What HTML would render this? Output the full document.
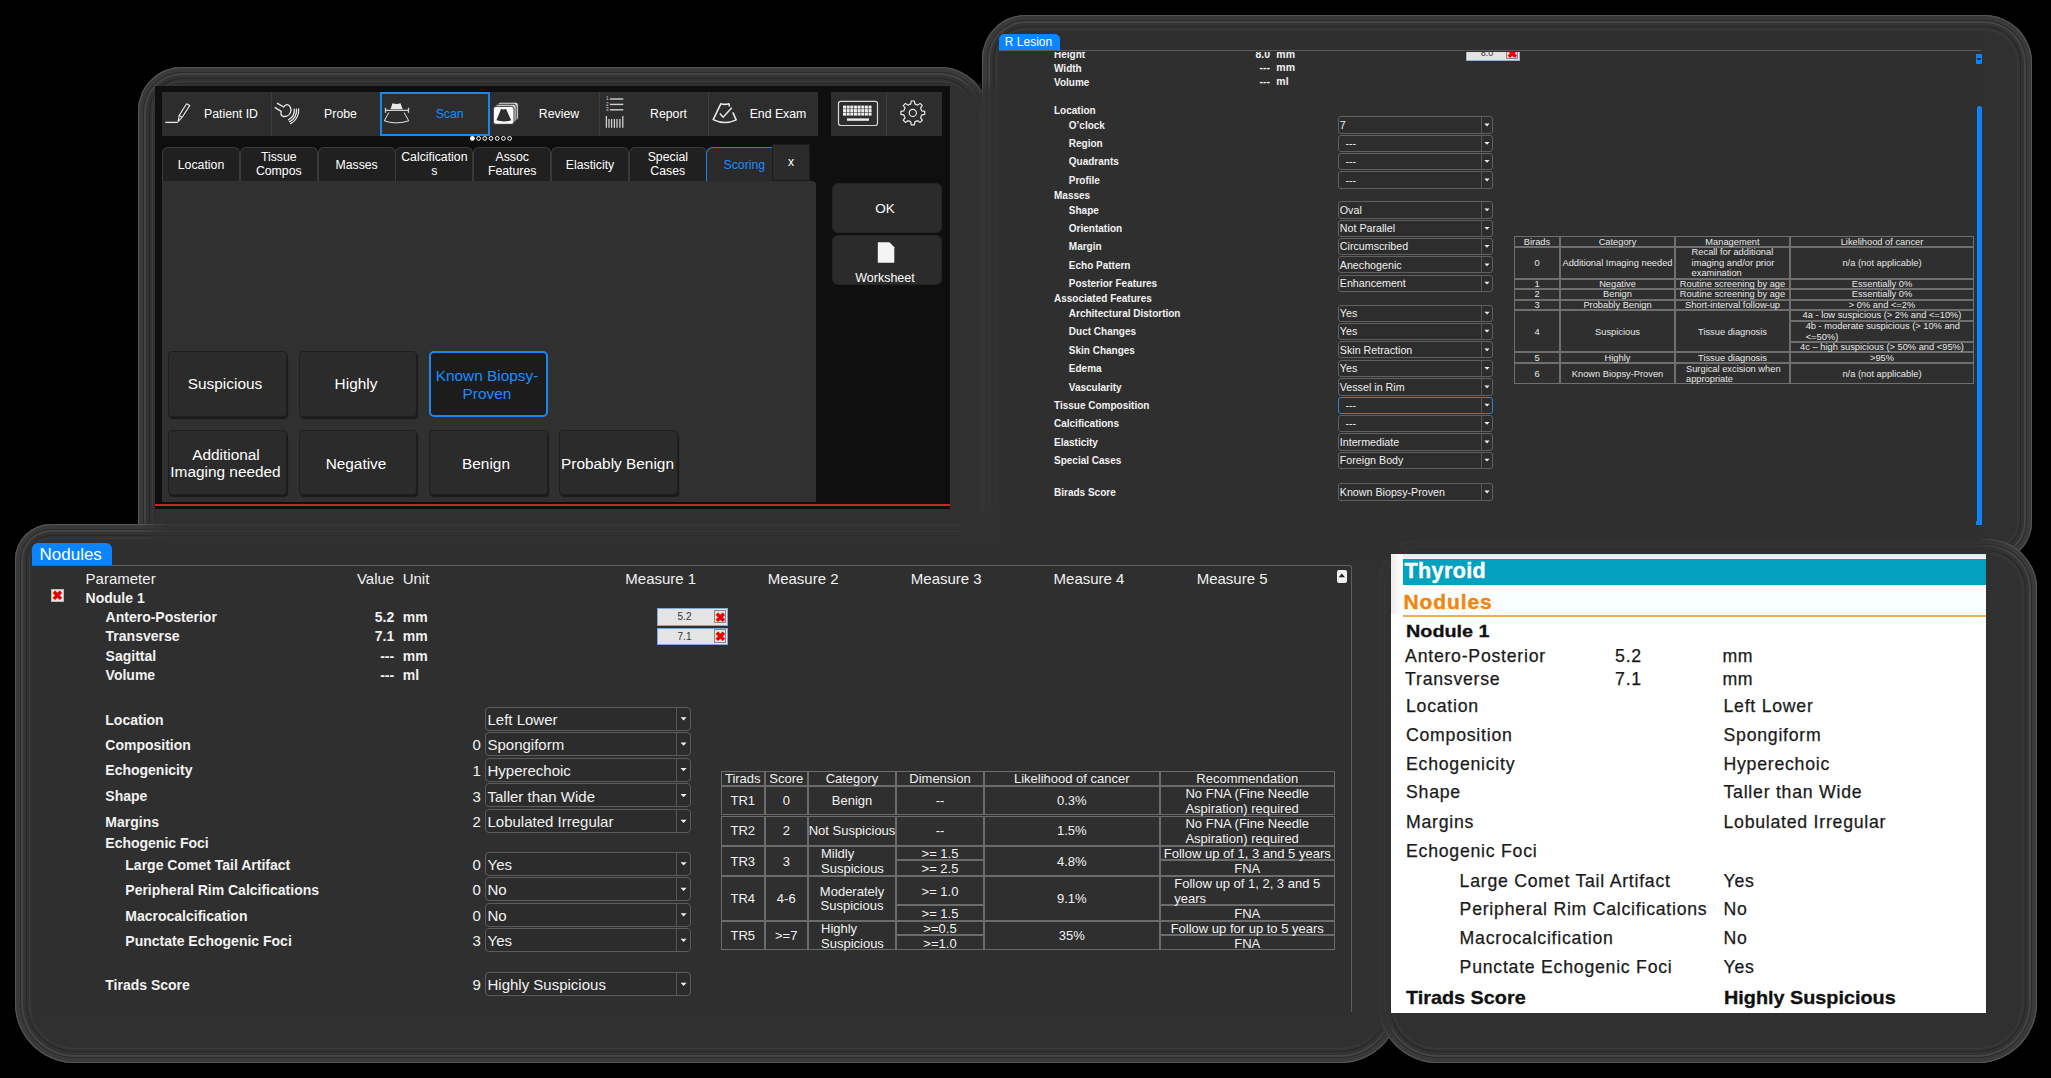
<!DOCTYPE html><html><head><meta charset="utf-8"><style>
html,body{margin:0;padding:0;background:#000;width:2051px;height:1078px;overflow:hidden;position:relative;font-family:"Liberation Sans", sans-serif;}
.t{position:absolute;white-space:nowrap;line-height:1;}
</style></head><body>
<div style="position:absolute;left:138px;top:67px;width:850px;height:533px;background:#303030;border-radius:44px 48px 60px 60px;box-shadow:inset 0 0 0 1px #565656, inset 0 0 0 5px #3a3a3a, inset 0 0 0 6px #2a2a2a, inset 0 0 0 8px #444444, inset 0 0 0 11px #333333, inset 0 0 0 12px #262626, inset 0 0 0 14px #333333, inset 0 0 0 15px #3a3a3a;"></div>
<div style="position:absolute;left:982px;top:15px;width:1050px;height:547px;background:#303030;border-radius:44px 48px 40px 60px;box-shadow:inset 0 0 0 1px #565656, inset 0 0 0 5px #3a3a3a, inset 0 0 0 6px #2a2a2a, inset 0 0 0 8px #444444, inset 0 0 0 11px #333333, inset 0 0 0 12px #262626, inset 0 0 0 14px #333333, inset 0 0 0 15px #3a3a3a;"></div>
<div style="position:absolute;left:15px;top:524px;width:1385px;height:539px;background:#303030;border-radius:36px 48px 60px 60px;box-shadow:inset 0 0 0 1px #565656, inset 0 0 0 5px #3a3a3a, inset 0 0 0 6px #2a2a2a, inset 0 0 0 8px #444444, inset 0 0 0 11px #333333, inset 0 0 0 12px #262626, inset 0 0 0 14px #333333, inset 0 0 0 15px #3a3a3a;"></div>
<div style="position:absolute;left:1378px;top:539px;width:659px;height:524px;background:#303030;border-radius:44px 50px 60px 60px;box-shadow:inset 0 0 0 1px #565656, inset 0 0 0 5px #3a3a3a, inset 0 0 0 6px #2a2a2a, inset 0 0 0 8px #444444, inset 0 0 0 11px #333333, inset 0 0 0 12px #262626, inset 0 0 0 14px #333333, inset 0 0 0 15px #3a3a3a;"></div>
<div style="position:absolute;left:962px;top:80px;width:36px;height:464px;background:linear-gradient(rgba(48,48,48,0) 0px, rgba(48,48,48,0.82) 14px);"></div>
<div style="position:absolute;left:140px;top:511px;width:860px;height:31px;background:linear-gradient(90deg, rgba(48,48,48,0) 0px, rgba(48,48,48,0.82) 26px);"></div>
<div style="position:absolute;left:990px;top:528px;width:1020px;height:26px;background:linear-gradient(90deg, rgba(48,48,48,0.82) 990px, rgba(48,48,48,0) 1020px);"></div>
<div style="position:absolute;left:1352px;top:540px;width:40px;height:508px;background:linear-gradient(rgba(48,48,48,0.82) 480px, rgba(48,48,48,0) 508px);"></div>
<div style="position:absolute;left:1340px;top:520px;width:60px;height:40px;background:rgba(48,48,48,0.82);"></div>
<div style="position:absolute;left:155px;top:86px;width:795px;height:423px;background:#0f0f0f;"></div>
<div style="position:absolute;left:162px;top:92px;width:656px;height:44px;background:#2d2d2d;"></div>
<div style="position:absolute;left:271px;top:92px;width:1px;height:44px;background:#3e3e3e;"></div>
<div style="position:absolute;left:380px;top:92px;width:1px;height:44px;background:#3e3e3e;"></div>
<div style="position:absolute;left:489px;top:92px;width:1px;height:44px;background:#3e3e3e;"></div>
<div style="position:absolute;left:599px;top:92px;width:1px;height:44px;background:#3e3e3e;"></div>
<div style="position:absolute;left:708px;top:92px;width:1px;height:44px;background:#3e3e3e;"></div>
<div style="position:absolute;left:380px;top:92px;width:110px;height:44px;border:2px solid #1a86f0;box-sizing:border-box;"></div>
<div style="position:absolute;left:831px;top:92px;width:55px;height:44px;background:#2d2d2d;"></div>
<div style="position:absolute;left:887px;top:92px;width:55px;height:44px;background:#2d2d2d;"></div>
<div style="position:absolute;left:886px;top:92px;width:1px;height:44px;background:#3e3e3e;"></div>
<div class="t" style="left:204.00px;top:107.59px;font-size:12.3px;font-weight:normal;color:#fff;">Patient ID</div>
<div class="t" style="left:300.50px;width:80px;text-align:center;top:107.59px;font-size:12.3px;font-weight:normal;color:#fff;">Probe</div>
<div class="t" style="left:409.70px;width:80px;text-align:center;top:107.59px;font-size:12.3px;font-weight:normal;color:#1a8cff;">Scan</div>
<div class="t" style="left:519.00px;width:80px;text-align:center;top:107.59px;font-size:12.3px;font-weight:normal;color:#fff;">Review</div>
<div class="t" style="left:628.50px;width:80px;text-align:center;top:107.59px;font-size:12.3px;font-weight:normal;color:#fff;">Report</div>
<div class="t" style="left:738.00px;width:80px;text-align:center;top:107.59px;font-size:12.3px;font-weight:normal;color:#fff;">End Exam</div>
<div style="position:absolute;left:162.0px;top:147px;width:78px;height:35px;background:#202020;border:1px solid #3a3a3a;border-bottom:none;border-radius:6px 6px 0 0;box-sizing:border-box;"></div>
<div class="t" style="left:156.00px;width:90px;text-align:center;top:158.59px;font-size:12.3px;font-weight:normal;color:#fff;">Location</div>
<div style="position:absolute;left:239.8px;top:147px;width:78px;height:35px;background:#202020;border:1px solid #3a3a3a;border-bottom:none;border-radius:6px 6px 0 0;box-sizing:border-box;"></div>
<div class="t" style="left:233.80px;width:90px;text-align:center;top:150.89px;font-size:12.3px;font-weight:normal;color:#fff;">Tissue</div>
<div class="t" style="left:233.80px;width:90px;text-align:center;top:164.59px;font-size:12.3px;font-weight:normal;color:#fff;">Compos</div>
<div style="position:absolute;left:317.6px;top:147px;width:78px;height:35px;background:#202020;border:1px solid #3a3a3a;border-bottom:none;border-radius:6px 6px 0 0;box-sizing:border-box;"></div>
<div class="t" style="left:311.60px;width:90px;text-align:center;top:158.59px;font-size:12.3px;font-weight:normal;color:#fff;">Masses</div>
<div style="position:absolute;left:395.4px;top:147px;width:78px;height:35px;background:#202020;border:1px solid #3a3a3a;border-bottom:none;border-radius:6px 6px 0 0;box-sizing:border-box;"></div>
<div class="t" style="left:389.40px;width:90px;text-align:center;top:150.89px;font-size:12.3px;font-weight:normal;color:#fff;">Calcification</div>
<div class="t" style="left:389.40px;width:90px;text-align:center;top:164.59px;font-size:12.3px;font-weight:normal;color:#fff;">s</div>
<div style="position:absolute;left:473.2px;top:147px;width:78px;height:35px;background:#202020;border:1px solid #3a3a3a;border-bottom:none;border-radius:6px 6px 0 0;box-sizing:border-box;"></div>
<div class="t" style="left:467.20px;width:90px;text-align:center;top:150.89px;font-size:12.3px;font-weight:normal;color:#fff;">Assoc</div>
<div class="t" style="left:467.20px;width:90px;text-align:center;top:164.59px;font-size:12.3px;font-weight:normal;color:#fff;">Features</div>
<div style="position:absolute;left:551.0px;top:147px;width:78px;height:35px;background:#202020;border:1px solid #3a3a3a;border-bottom:none;border-radius:6px 6px 0 0;box-sizing:border-box;"></div>
<div class="t" style="left:545.00px;width:90px;text-align:center;top:158.59px;font-size:12.3px;font-weight:normal;color:#fff;">Elasticity</div>
<div style="position:absolute;left:628.8px;top:147px;width:78px;height:35px;background:#202020;border:1px solid #3a3a3a;border-bottom:none;border-radius:6px 6px 0 0;box-sizing:border-box;"></div>
<div class="t" style="left:622.80px;width:90px;text-align:center;top:150.89px;font-size:12.3px;font-weight:normal;color:#fff;">Special</div>
<div class="t" style="left:622.80px;width:90px;text-align:center;top:164.59px;font-size:12.3px;font-weight:normal;color:#fff;">Cases</div>
<div style="position:absolute;left:706px;top:147px;width:68px;height:35px;background:#2a2a2a;border:1.5px solid #1a86f0;border-right:none;border-bottom:none;border-radius:7px 0 0 0;box-sizing:border-box;"></div>
<div class="t" style="left:704.30px;width:80px;text-align:center;top:159.39px;font-size:12.3px;font-weight:normal;color:#1a8cff;">Scoring</div>
<div style="position:absolute;left:772px;top:144px;width:38px;height:37px;background:#2b2b2b;border:1px solid #1c1c1c;box-sizing:border-box;"></div>
<div class="t" style="left:776.00px;width:30px;text-align:center;top:156.49px;font-size:12.3px;font-weight:normal;color:#fff;">x</div>
<div style="position:absolute;left:162px;top:181px;width:654px;height:321px;background:#303030;border-radius:0 4px 0 0;"></div>
<div style="position:absolute;left:168px;top:351px;width:118.5px;height:66px;background:#2b2b2b;border:1px solid #1f1f1f;border-radius:4px;box-shadow:1px 2px 1px #1a1a1a;box-sizing:border-box;"></div>
<div style="position:absolute;left:298.5px;top:351px;width:118.5px;height:66px;background:#2b2b2b;border:1px solid #1f1f1f;border-radius:4px;box-shadow:1px 2px 1px #1a1a1a;box-sizing:border-box;"></div>
<div style="position:absolute;left:429px;top:351px;width:118.5px;height:66px;background:#1c1c1c;border:2px solid #1a86f0;border-radius:5px;box-sizing:border-box;"></div>
<div style="position:absolute;left:168px;top:430px;width:118.5px;height:65px;background:#2b2b2b;border:1px solid #1f1f1f;border-radius:4px;box-shadow:1px 2px 1px #1a1a1a;box-sizing:border-box;"></div>
<div style="position:absolute;left:298.5px;top:430px;width:118.5px;height:65px;background:#2b2b2b;border:1px solid #1f1f1f;border-radius:4px;box-shadow:1px 2px 1px #1a1a1a;box-sizing:border-box;"></div>
<div style="position:absolute;left:429px;top:430px;width:118.5px;height:65px;background:#2b2b2b;border:1px solid #1f1f1f;border-radius:4px;box-shadow:1px 2px 1px #1a1a1a;box-sizing:border-box;"></div>
<div style="position:absolute;left:559px;top:430px;width:118.5px;height:65px;background:#2b2b2b;border:1px solid #1f1f1f;border-radius:4px;box-shadow:1px 2px 1px #1a1a1a;box-sizing:border-box;"></div>
<div class="t" style="left:160.00px;width:130px;text-align:center;top:376.16px;font-size:15.4px;font-weight:normal;color:#fff;">Suspicious</div>
<div class="t" style="left:291.00px;width:130px;text-align:center;top:376.16px;font-size:15.4px;font-weight:normal;color:#fff;">Highly</div>
<div class="t" style="left:422.00px;width:130px;text-align:center;top:367.76px;font-size:15.4px;font-weight:normal;color:#1a8cff;">Known Biopsy-</div>
<div class="t" style="left:422.00px;width:130px;text-align:center;top:385.76px;font-size:15.4px;font-weight:normal;color:#1a8cff;">Proven</div>
<div class="t" style="left:161.00px;width:130px;text-align:center;top:446.56px;font-size:15.4px;font-weight:normal;color:#fff;">Additional</div>
<div class="t" style="left:160.50px;width:130px;text-align:center;top:464.16px;font-size:15.4px;font-weight:normal;color:#fff;">Imaging needed</div>
<div class="t" style="left:291.00px;width:130px;text-align:center;top:455.76px;font-size:15.4px;font-weight:normal;color:#fff;">Negative</div>
<div class="t" style="left:421.00px;width:130px;text-align:center;top:455.76px;font-size:15.4px;font-weight:normal;color:#fff;">Benign</div>
<div class="t" style="left:552.50px;width:130px;text-align:center;top:455.76px;font-size:15.4px;font-weight:normal;color:#fff;">Probably Benign</div>
<div style="position:absolute;left:832px;top:183px;width:110px;height:50px;background:#2b2b2b;border:1px solid #242424;border-radius:6px;box-sizing:border-box;"></div>
<div style="position:absolute;left:832px;top:235px;width:110px;height:50px;background:#2b2b2b;border:1px solid #242424;border-radius:6px;box-sizing:border-box;"></div>
<div class="t" style="left:855.00px;width:60px;text-align:center;top:201.97px;font-size:13.5px;font-weight:normal;color:#fff;">OK</div>
<div class="t" style="left:835.00px;width:100px;text-align:center;top:272.12px;font-size:12.5px;font-weight:normal;color:#fff;">Worksheet</div>
<div style="position:absolute;left:155px;top:504px;width:795px;height:2px;background:#c62828;"></div>
<div class="t" style="left:606.00px;top:97.49px;font-size:4.5px;font-weight:normal;color:#d0d0d0;">1</div>
<div class="t" style="left:606.00px;top:102.89px;font-size:4.5px;font-weight:normal;color:#d0d0d0;">2</div>
<div class="t" style="left:606.00px;top:108.29px;font-size:4.5px;font-weight:normal;color:#d0d0d0;">3</div>
<svg width="2051" height="1078" style="position:absolute;left:0;top:0"><circle cx="472.4" cy="138.4" r="2.4" fill="#fff"/><circle cx="478.6" cy="138.4" r="1.9" fill="none" stroke="#fff" stroke-width="1"/><circle cx="484.8" cy="138.4" r="1.9" fill="none" stroke="#fff" stroke-width="1"/><circle cx="491.0" cy="138.4" r="1.9" fill="none" stroke="#fff" stroke-width="1"/><circle cx="497.2" cy="138.4" r="1.9" fill="none" stroke="#fff" stroke-width="1"/><circle cx="503.4" cy="138.4" r="1.9" fill="none" stroke="#fff" stroke-width="1"/><circle cx="509.6" cy="138.4" r="1.9" fill="none" stroke="#fff" stroke-width="1"/><path d="M165.3 122.4 H177.7" stroke="#e8e8e8" stroke-width="1.3" fill="none"/><path d="M178.1 121.6 L179.2 115.4 L186.6 103.7 L189.8 105.4 L182.2 117.2 Z M179.2 115.4 L182.2 117.2" stroke="#e8e8e8" stroke-width="1.1" fill="none" stroke-linejoin="round"/><path d="M277.5 103.3 L283.7 107 C284.8 105.2 286.2 104.5 287.2 104.6 C289.8 104.9 291.2 108 290.9 110.8 C290.6 113.6 288.3 116.3 284.8 116.5 C282.4 116.6 280.6 115.3 281 112.9 L281.2 111.4 L275.1 107.6" stroke="#e8e8e8" stroke-width="1.35" fill="none" stroke-linecap="round" stroke-linejoin="round"/><path d="M294.26 109.26 A10.8 10.8 0 0 1 288.57 119.74" stroke="#e8e8e8" stroke-width="1.3" fill="none" stroke-linecap="round"/><path d="M296.45 109.07 A13.0 13.0 0 0 1 289.60 121.68" stroke="#e8e8e8" stroke-width="1.3" fill="none" stroke-linecap="round"/><path d="M298.64 108.88 A15.2 15.2 0 0 1 290.64 123.62" stroke="#e8e8e8" stroke-width="1.3" fill="none" stroke-linecap="round"/><path d="M390.5 109.3 L392.5 103.2 Q396.5 104.6 400.5 103.2 L402.7 109.3 Z" fill="#e8e8e8"/><path d="M385.5 110.4 H408.5 M385.5 107.8 V112.8 M408.5 107.8 V112.8" stroke="#cfcfcf" stroke-width="1.3" fill="none"/><path d="M388.8 112.6 L384.3 120.8 Q396.5 125 408.8 120.8 L404.1 112.6" stroke="#e8e8e8" stroke-width="1" fill="none" stroke-dasharray="20 0"/><rect x="497.7" y="102.2" width="20.7" height="17.9" rx="2.6" fill="#d4d4d4" stroke="#2d2d2d" stroke-width="0.9"/><rect x="495.5" y="104.3" width="20.7" height="17.9" rx="2.6" fill="#d4d4d4" stroke="#2d2d2d" stroke-width="0.9"/><rect x="493.3" y="106.4" width="20.7" height="17.9" rx="2.6" fill="#fafafa" stroke="#2d2d2d" stroke-width="0.9"/><path d="M501.1 109.1 Q503.6 109.9 506.1 109.1 L511.2 120.3 Q503.8 122.6 496.4 120.3 Z" fill="#2d2d2d"/><path d="M609.8 99 H623.3" stroke="#d0d0d0" stroke-width="1.4"/><path d="M609.8 104.4 H623.3" stroke="#d0d0d0" stroke-width="1.4"/><path d="M609.8 109.8 H623.3" stroke="#d0d0d0" stroke-width="1.4"/><path d="M606.4 116 V127.8" stroke="#d0d0d0" stroke-width="1.3"/><path d="M609.0 119 V127.8" stroke="#d0d0d0" stroke-width="1.3"/><path d="M611.6 119 V127.8" stroke="#d0d0d0" stroke-width="1.3"/><path d="M614.4 119 V127.8" stroke="#d0d0d0" stroke-width="1.3"/><path d="M617.0 119 V127.8" stroke="#d0d0d0" stroke-width="1.3"/><path d="M619.9 119 V127.8" stroke="#d0d0d0" stroke-width="1.3"/><path d="M622.8 116 V127.8" stroke="#d0d0d0" stroke-width="1.3"/><path d="M729.5 106.5 L728.9 103.8 Q724.8 105 720.8 103.8 L713.2 119.6 Q724.7 125.3 736.2 119.9 L732.8 112.3" stroke="#e8e8e8" stroke-width="1.6" fill="none" stroke-linejoin="round"/><path d="M719.8 113.6 L723.1 117.2 L731.8 107.7" stroke="#e8e8e8" stroke-width="1.5" fill="none"/><rect x="838.5" y="101.3" width="39" height="24.2" rx="2.2" fill="none" stroke="#d8d8d8" stroke-width="1.2"/><rect x="843.00" y="105.6" width="3.0" height="3.0" fill="#eee"/><rect x="846.65" y="105.6" width="3.0" height="3.0" fill="#eee"/><rect x="850.30" y="105.6" width="3.0" height="3.0" fill="#eee"/><rect x="853.95" y="105.6" width="3.0" height="3.0" fill="#eee"/><rect x="857.60" y="105.6" width="3.0" height="3.0" fill="#eee"/><rect x="861.25" y="105.6" width="3.0" height="3.0" fill="#eee"/><rect x="864.90" y="105.6" width="3.0" height="3.0" fill="#eee"/><rect x="868.55" y="105.6" width="3.0" height="3.0" fill="#eee"/><rect x="843.00" y="109.1" width="3.0" height="3.0" fill="#eee"/><rect x="846.65" y="109.1" width="3.0" height="3.0" fill="#eee"/><rect x="850.30" y="109.1" width="3.0" height="3.0" fill="#eee"/><rect x="853.95" y="109.1" width="3.0" height="3.0" fill="#eee"/><rect x="857.60" y="109.1" width="3.0" height="3.0" fill="#eee"/><rect x="861.25" y="109.1" width="3.0" height="3.0" fill="#eee"/><rect x="864.90" y="109.1" width="3.0" height="3.0" fill="#eee"/><rect x="868.55" y="109.1" width="3.0" height="3.0" fill="#eee"/><rect x="843.00" y="112.6" width="3.0" height="3.0" fill="#eee"/><rect x="846.65" y="112.6" width="3.0" height="3.0" fill="#eee"/><rect x="850.30" y="112.6" width="3.0" height="3.0" fill="#eee"/><rect x="853.95" y="112.6" width="3.0" height="3.0" fill="#eee"/><rect x="857.60" y="112.6" width="3.0" height="3.0" fill="#eee"/><rect x="861.25" y="112.6" width="3.0" height="3.0" fill="#eee"/><rect x="864.90" y="112.6" width="3.0" height="3.0" fill="#eee"/><rect x="868.55" y="112.6" width="3.0" height="3.0" fill="#eee"/><rect x="847" y="118.4" width="22" height="2.4" fill="#eee"/><path d="M921.78 110.89 L924.70 111.34 L924.70 114.46 L921.78 114.91 L920.57 117.83 L922.31 120.21 L920.11 122.41 L917.73 120.67 L914.81 121.88 L914.36 124.80 L911.24 124.80 L910.79 121.88 L907.87 120.67 L905.49 122.41 L903.29 120.21 L905.03 117.83 L903.82 114.91 L900.90 114.46 L900.90 111.34 L903.82 110.89 L905.03 107.97 L903.29 105.59 L905.49 103.39 L907.87 105.13 L910.79 103.92 L911.24 101.00 L914.36 101.00 L914.81 103.92 L917.73 105.13 L920.11 103.39 L922.31 105.59 L920.57 107.97 Z" fill="none" stroke="#e8e8e8" stroke-width="1.2" stroke-linejoin="round"/><circle cx="912.8" cy="112.9" r="3.6" fill="none" stroke="#e8e8e8" stroke-width="1.2"/><path d="M877.8 242.3 H889.5 L894.3 247.2 V262.8 H877.8 Z" fill="#f4f4f4"/></svg>
<div style="position:absolute;left:999px;top:34px;width:982px;height:506px;background:#2f2f2f;"></div>
<div style="position:absolute;left:999px;top:34px;width:61px;height:17px;background:#0a84ff;border-radius:5px 5px 0 0;"></div>
<div class="t" style="left:1004.80px;top:35.84px;font-size:12px;font-weight:normal;color:#fff;">R Lesion</div>
<div style="position:absolute;left:999px;top:50px;width:982px;height:1px;background:#5c5c5c;"></div>
<div style="position:absolute;left:999px;top:52.3px;width:982px;height:480px;overflow:hidden;">
<div class="t" style="left:55.00px;top:-2.36px;font-size:10.0px;font-weight:bold;color:#f2f2f2;">Height</div>
<div class="t" style="left:55.00px;top:11.24px;font-size:10.0px;font-weight:bold;color:#f2f2f2;">Width</div>
<div class="t" style="left:55.00px;top:25.24px;font-size:10.0px;font-weight:bold;color:#f2f2f2;">Volume</div>
<div class="t" style="left:55.00px;top:53.64px;font-size:10.0px;font-weight:bold;color:#f2f2f2;">Location</div>
<div class="t" style="left:69.80px;top:68.73px;font-size:10.0px;font-weight:bold;color:#f2f2f2;">O&#8217;clock</div>
<div class="t" style="left:69.80px;top:87.03px;font-size:10.0px;font-weight:bold;color:#f2f2f2;">Region</div>
<div class="t" style="left:69.80px;top:105.03px;font-size:10.0px;font-weight:bold;color:#f2f2f2;">Quadrants</div>
<div class="t" style="left:69.80px;top:123.73px;font-size:10.0px;font-weight:bold;color:#f2f2f2;">Profile</div>
<div class="t" style="left:55.00px;top:138.53px;font-size:10.0px;font-weight:bold;color:#f2f2f2;">Masses</div>
<div class="t" style="left:69.80px;top:153.63px;font-size:10.0px;font-weight:bold;color:#f2f2f2;">Shape</div>
<div class="t" style="left:69.80px;top:172.03px;font-size:10.0px;font-weight:bold;color:#f2f2f2;">Orientation</div>
<div class="t" style="left:69.80px;top:190.03px;font-size:10.0px;font-weight:bold;color:#f2f2f2;">Margin</div>
<div class="t" style="left:69.80px;top:208.53px;font-size:10.0px;font-weight:bold;color:#f2f2f2;">Echo Pattern</div>
<div class="t" style="left:69.80px;top:226.93px;font-size:10.0px;font-weight:bold;color:#f2f2f2;">Posterior Features</div>
<div class="t" style="left:55.00px;top:241.63px;font-size:10.0px;font-weight:bold;color:#f2f2f2;">Associated Features</div>
<div class="t" style="left:69.80px;top:256.94px;font-size:10.0px;font-weight:bold;color:#f2f2f2;">Architectural Distortion</div>
<div class="t" style="left:69.80px;top:274.83px;font-size:10.0px;font-weight:bold;color:#f2f2f2;">Duct Changes</div>
<div class="t" style="left:69.80px;top:293.54px;font-size:10.0px;font-weight:bold;color:#f2f2f2;">Skin Changes</div>
<div class="t" style="left:69.80px;top:312.13px;font-size:10.0px;font-weight:bold;color:#f2f2f2;">Edema</div>
<div class="t" style="left:69.80px;top:330.63px;font-size:10.0px;font-weight:bold;color:#f2f2f2;">Vascularity</div>
<div class="t" style="left:55.00px;top:348.94px;font-size:10.0px;font-weight:bold;color:#f2f2f2;">Tissue Composition</div>
<div class="t" style="left:55.00px;top:367.04px;font-size:10.0px;font-weight:bold;color:#f2f2f2;">Calcifications</div>
<div class="t" style="left:55.00px;top:385.74px;font-size:10.0px;font-weight:bold;color:#f2f2f2;">Elasticity</div>
<div class="t" style="left:55.00px;top:403.83px;font-size:10.0px;font-weight:bold;color:#f2f2f2;">Special Cases</div>
<div class="t" style="left:55.00px;top:435.74px;font-size:10.0px;font-weight:bold;color:#f2f2f2;">Birads Score</div>
<div class="t" style="left:231.00px;width:40px;text-align:right;top:-3.49px;font-size:10.5px;font-weight:bold;color:#f2f2f2;">8.0</div>
<div class="t" style="left:231.00px;width:40px;text-align:right;top:10.11px;font-size:10.5px;font-weight:bold;color:#f2f2f2;">---</div>
<div class="t" style="left:231.00px;width:40px;text-align:right;top:24.11px;font-size:10.5px;font-weight:bold;color:#f2f2f2;">---</div>
<div class="t" style="left:277.30px;top:-3.49px;font-size:10.5px;font-weight:bold;color:#f2f2f2;">mm</div>
<div class="t" style="left:277.30px;top:10.11px;font-size:10.5px;font-weight:bold;color:#f2f2f2;">mm</div>
<div class="t" style="left:277.30px;top:24.11px;font-size:10.5px;font-weight:bold;color:#f2f2f2;">ml</div>
<div style="position:absolute;left:467px;top:-6.299999999999997px;width:54px;height:14.8px;background:#e3e3e3;border:1px solid #8fb3d6;box-sizing:border-box;"></div>
<div class="t" style="left:473.00px;width:30px;text-align:center;top:-3.42px;font-size:9px;font-weight:normal;color:#333;">8.0</div>
<div style="position:absolute;left:507px;top:-5.299999999999997px;width:12px;height:12px;background:#ddd;border:1px solid #888;box-sizing:border-box;"></div>
<div class="t" style="left:506.00px;width:14px;text-align:center;top:-5.80px;font-size:13px;font-weight:bold;color:#e00;">&#10006;</div>
<div style="position:absolute;left:339px;top:64.20000000000002px;width:155px;height:17.2px;background:#2d2d2d;border:1px solid #606060;border-radius:3px;box-sizing:border-box;"></div>
<div style="position:absolute;left:482px;top:65.20000000000002px;width:1px;height:15.2px;background:#555;"></div>
<div class="t" style="left:340.80px;top:67.44px;font-size:10.7px;font-weight:normal;color:#f0f0f0;">7</div>
<div style="position:absolute;left:339px;top:82.49999999999999px;width:155px;height:17.2px;background:#2d2d2d;border:1px solid #606060;border-radius:3px;box-sizing:border-box;"></div>
<div style="position:absolute;left:482px;top:83.49999999999999px;width:1px;height:15.2px;background:#555;"></div>
<div class="t" style="left:346.50px;top:85.74px;font-size:10.7px;font-weight:normal;color:#f0f0f0;">---</div>
<div style="position:absolute;left:339px;top:100.49999999999999px;width:155px;height:17.2px;background:#2d2d2d;border:1px solid #606060;border-radius:3px;box-sizing:border-box;"></div>
<div style="position:absolute;left:482px;top:101.49999999999999px;width:1px;height:15.2px;background:#555;"></div>
<div class="t" style="left:346.50px;top:103.74px;font-size:10.7px;font-weight:normal;color:#f0f0f0;">---</div>
<div style="position:absolute;left:339px;top:119.2px;width:155px;height:17.2px;background:#2d2d2d;border:1px solid #606060;border-radius:3px;box-sizing:border-box;"></div>
<div style="position:absolute;left:482px;top:120.2px;width:1px;height:15.2px;background:#555;"></div>
<div class="t" style="left:346.50px;top:122.44px;font-size:10.7px;font-weight:normal;color:#f0f0f0;">---</div>
<div style="position:absolute;left:339px;top:149.09999999999997px;width:155px;height:17.2px;background:#2d2d2d;border:1px solid #606060;border-radius:3px;box-sizing:border-box;"></div>
<div style="position:absolute;left:482px;top:150.09999999999997px;width:1px;height:15.2px;background:#555;"></div>
<div class="t" style="left:340.80px;top:152.34px;font-size:10.7px;font-weight:normal;color:#f0f0f0;">Oval</div>
<div style="position:absolute;left:339px;top:167.5px;width:155px;height:17.2px;background:#2d2d2d;border:1px solid #606060;border-radius:3px;box-sizing:border-box;"></div>
<div style="position:absolute;left:482px;top:168.5px;width:1px;height:15.2px;background:#555;"></div>
<div class="t" style="left:340.80px;top:170.74px;font-size:10.7px;font-weight:normal;color:#f0f0f0;">Not Parallel</div>
<div style="position:absolute;left:339px;top:185.5px;width:155px;height:17.2px;background:#2d2d2d;border:1px solid #606060;border-radius:3px;box-sizing:border-box;"></div>
<div style="position:absolute;left:482px;top:186.5px;width:1px;height:15.2px;background:#555;"></div>
<div class="t" style="left:340.80px;top:188.74px;font-size:10.7px;font-weight:normal;color:#f0f0f0;">Circumscribed</div>
<div style="position:absolute;left:339px;top:204.0px;width:155px;height:17.2px;background:#2d2d2d;border:1px solid #606060;border-radius:3px;box-sizing:border-box;"></div>
<div style="position:absolute;left:482px;top:205.0px;width:1px;height:15.2px;background:#555;"></div>
<div class="t" style="left:340.80px;top:207.24px;font-size:10.7px;font-weight:normal;color:#f0f0f0;">Anechogenic</div>
<div style="position:absolute;left:339px;top:222.39999999999998px;width:155px;height:17.2px;background:#2d2d2d;border:1px solid #606060;border-radius:3px;box-sizing:border-box;"></div>
<div style="position:absolute;left:482px;top:223.39999999999998px;width:1px;height:15.2px;background:#555;"></div>
<div class="t" style="left:340.80px;top:225.64px;font-size:10.7px;font-weight:normal;color:#f0f0f0;">Enhancement</div>
<div style="position:absolute;left:339px;top:252.39999999999998px;width:155px;height:17.2px;background:#2d2d2d;border:1px solid #606060;border-radius:3px;box-sizing:border-box;"></div>
<div style="position:absolute;left:482px;top:253.39999999999998px;width:1px;height:15.2px;background:#555;"></div>
<div class="t" style="left:340.80px;top:255.64px;font-size:10.7px;font-weight:normal;color:#f0f0f0;">Yes</div>
<div style="position:absolute;left:339px;top:270.29999999999995px;width:155px;height:17.2px;background:#2d2d2d;border:1px solid #606060;border-radius:3px;box-sizing:border-box;"></div>
<div style="position:absolute;left:482px;top:271.29999999999995px;width:1px;height:15.2px;background:#555;"></div>
<div class="t" style="left:340.80px;top:273.54px;font-size:10.7px;font-weight:normal;color:#f0f0f0;">Yes</div>
<div style="position:absolute;left:339px;top:289.0px;width:155px;height:17.2px;background:#2d2d2d;border:1px solid #606060;border-radius:3px;box-sizing:border-box;"></div>
<div style="position:absolute;left:482px;top:290.0px;width:1px;height:15.2px;background:#555;"></div>
<div class="t" style="left:340.80px;top:292.24px;font-size:10.7px;font-weight:normal;color:#f0f0f0;">Skin Retraction</div>
<div style="position:absolute;left:339px;top:307.59999999999997px;width:155px;height:17.2px;background:#2d2d2d;border:1px solid #606060;border-radius:3px;box-sizing:border-box;"></div>
<div style="position:absolute;left:482px;top:308.59999999999997px;width:1px;height:15.2px;background:#555;"></div>
<div class="t" style="left:340.80px;top:310.84px;font-size:10.7px;font-weight:normal;color:#f0f0f0;">Yes</div>
<div style="position:absolute;left:339px;top:326.09999999999997px;width:155px;height:17.2px;background:#2d2d2d;border:1px solid #606060;border-radius:3px;box-sizing:border-box;"></div>
<div style="position:absolute;left:482px;top:327.09999999999997px;width:1px;height:15.2px;background:#555;"></div>
<div class="t" style="left:340.80px;top:329.34px;font-size:10.7px;font-weight:normal;color:#f0f0f0;">Vessel in Rim</div>
<div style="position:absolute;left:339px;top:344.4px;width:155px;height:17.2px;background:#2d2d2d;border:1.5px solid #3a7fc4;border-radius:3px;box-sizing:border-box;"></div>
<div style="position:absolute;left:482px;top:345.4px;width:1px;height:15.2px;background:#555;"></div>
<div class="t" style="left:346.50px;top:347.64px;font-size:10.7px;font-weight:normal;color:#f0f0f0;">---</div>
<div style="position:absolute;left:339px;top:362.5px;width:155px;height:17.2px;background:#2d2d2d;border:1px solid #606060;border-radius:3px;box-sizing:border-box;"></div>
<div style="position:absolute;left:482px;top:363.5px;width:1px;height:15.2px;background:#555;"></div>
<div class="t" style="left:346.50px;top:365.74px;font-size:10.7px;font-weight:normal;color:#f0f0f0;">---</div>
<div style="position:absolute;left:339px;top:381.2px;width:155px;height:17.2px;background:#2d2d2d;border:1px solid #606060;border-radius:3px;box-sizing:border-box;"></div>
<div style="position:absolute;left:482px;top:382.2px;width:1px;height:15.2px;background:#555;"></div>
<div class="t" style="left:340.80px;top:384.44px;font-size:10.7px;font-weight:normal;color:#f0f0f0;">Intermediate</div>
<div style="position:absolute;left:339px;top:399.29999999999995px;width:155px;height:17.2px;background:#2d2d2d;border:1px solid #606060;border-radius:3px;box-sizing:border-box;"></div>
<div style="position:absolute;left:482px;top:400.29999999999995px;width:1px;height:15.2px;background:#555;"></div>
<div class="t" style="left:340.80px;top:402.54px;font-size:10.7px;font-weight:normal;color:#f0f0f0;">Foreign Body</div>
<div style="position:absolute;left:339px;top:431.2px;width:155px;height:17.2px;background:#2d2d2d;border:1px solid #606060;border-radius:3px;box-sizing:border-box;"></div>
<div style="position:absolute;left:482px;top:432.2px;width:1px;height:15.2px;background:#555;"></div>
<div class="t" style="left:340.80px;top:434.44px;font-size:10.7px;font-weight:normal;color:#f0f0f0;">Known Biopsy-Proven</div>
<svg width="982" height="480" style="position:absolute;left:0;top:0"><path d="M485.4 71.6 H490.6 L488.0 74.4 Z" fill="#f0f0f0"/><path d="M485.4 89.9 H490.6 L488.0 92.7 Z" fill="#f0f0f0"/><path d="M485.4 107.9 H490.6 L488.0 110.7 Z" fill="#f0f0f0"/><path d="M485.4 126.6 H490.6 L488.0 129.4 Z" fill="#f0f0f0"/><path d="M485.4 156.5 H490.6 L488.0 159.3 Z" fill="#f0f0f0"/><path d="M485.4 174.9 H490.6 L488.0 177.7 Z" fill="#f0f0f0"/><path d="M485.4 192.9 H490.6 L488.0 195.7 Z" fill="#f0f0f0"/><path d="M485.4 211.4 H490.6 L488.0 214.2 Z" fill="#f0f0f0"/><path d="M485.4 229.8 H490.6 L488.0 232.6 Z" fill="#f0f0f0"/><path d="M485.4 259.8 H490.6 L488.0 262.6 Z" fill="#f0f0f0"/><path d="M485.4 277.7 H490.6 L488.0 280.5 Z" fill="#f0f0f0"/><path d="M485.4 296.4 H490.6 L488.0 299.2 Z" fill="#f0f0f0"/><path d="M485.4 315.0 H490.6 L488.0 317.8 Z" fill="#f0f0f0"/><path d="M485.4 333.5 H490.6 L488.0 336.3 Z" fill="#f0f0f0"/><path d="M485.4 351.8 H490.6 L488.0 354.6 Z" fill="#f0f0f0"/><path d="M485.4 369.9 H490.6 L488.0 372.7 Z" fill="#f0f0f0"/><path d="M485.4 388.6 H490.6 L488.0 391.4 Z" fill="#f0f0f0"/><path d="M485.4 406.7 H490.6 L488.0 409.5 Z" fill="#f0f0f0"/><path d="M485.4 438.6 H490.6 L488.0 441.4 Z" fill="#f0f0f0"/></svg>
<div style="position:absolute;left:515px;top:184.2px;width:46px;height:10.400000000000006px;border:1px solid #6f6f6f;box-sizing:border-box;"></div>
<div style="position:absolute;left:561px;top:184.2px;width:115px;height:10.400000000000006px;border:1px solid #6f6f6f;box-sizing:border-box;"></div>
<div style="position:absolute;left:676px;top:184.2px;width:115px;height:10.400000000000006px;border:1px solid #6f6f6f;box-sizing:border-box;"></div>
<div style="position:absolute;left:791px;top:184.2px;width:184px;height:10.400000000000006px;border:1px solid #6f6f6f;box-sizing:border-box;"></div>
<div style="position:absolute;left:515px;top:194.60000000000002px;width:46px;height:31.80000000000001px;border:1px solid #6f6f6f;box-sizing:border-box;"></div>
<div style="position:absolute;left:561px;top:194.60000000000002px;width:115px;height:31.80000000000001px;border:1px solid #6f6f6f;box-sizing:border-box;"></div>
<div style="position:absolute;left:676px;top:194.60000000000002px;width:115px;height:31.80000000000001px;border:1px solid #6f6f6f;box-sizing:border-box;"></div>
<div style="position:absolute;left:791px;top:194.60000000000002px;width:184px;height:31.80000000000001px;border:1px solid #6f6f6f;box-sizing:border-box;"></div>
<div style="position:absolute;left:515px;top:226.39999999999998px;width:46px;height:10.699999999999989px;border:1px solid #6f6f6f;box-sizing:border-box;"></div>
<div style="position:absolute;left:561px;top:226.39999999999998px;width:115px;height:10.699999999999989px;border:1px solid #6f6f6f;box-sizing:border-box;"></div>
<div style="position:absolute;left:676px;top:226.39999999999998px;width:115px;height:10.699999999999989px;border:1px solid #6f6f6f;box-sizing:border-box;"></div>
<div style="position:absolute;left:791px;top:226.39999999999998px;width:184px;height:10.699999999999989px;border:1px solid #6f6f6f;box-sizing:border-box;"></div>
<div style="position:absolute;left:515px;top:237.09999999999997px;width:46px;height:10.5px;border:1px solid #6f6f6f;box-sizing:border-box;"></div>
<div style="position:absolute;left:561px;top:237.09999999999997px;width:115px;height:10.5px;border:1px solid #6f6f6f;box-sizing:border-box;"></div>
<div style="position:absolute;left:676px;top:237.09999999999997px;width:115px;height:10.5px;border:1px solid #6f6f6f;box-sizing:border-box;"></div>
<div style="position:absolute;left:791px;top:237.09999999999997px;width:184px;height:10.5px;border:1px solid #6f6f6f;box-sizing:border-box;"></div>
<div style="position:absolute;left:515px;top:247.59999999999997px;width:46px;height:10.5px;border:1px solid #6f6f6f;box-sizing:border-box;"></div>
<div style="position:absolute;left:561px;top:247.59999999999997px;width:115px;height:10.5px;border:1px solid #6f6f6f;box-sizing:border-box;"></div>
<div style="position:absolute;left:676px;top:247.59999999999997px;width:115px;height:10.5px;border:1px solid #6f6f6f;box-sizing:border-box;"></div>
<div style="position:absolute;left:791px;top:247.59999999999997px;width:184px;height:10.5px;border:1px solid #6f6f6f;box-sizing:border-box;"></div>
<div style="position:absolute;left:515px;top:258.09999999999997px;width:46px;height:42.10000000000002px;border:1px solid #6f6f6f;box-sizing:border-box;"></div>
<div style="position:absolute;left:561px;top:258.09999999999997px;width:115px;height:42.10000000000002px;border:1px solid #6f6f6f;box-sizing:border-box;"></div>
<div style="position:absolute;left:676px;top:258.09999999999997px;width:115px;height:42.10000000000002px;border:1px solid #6f6f6f;box-sizing:border-box;"></div>
<div style="position:absolute;left:791px;top:258.09999999999997px;width:184px;height:10.699999999999989px;border:1px solid #6f6f6f;box-sizing:border-box;"></div>
<div style="position:absolute;left:791px;top:268.79999999999995px;width:184px;height:20.69999999999999px;border:1px solid #6f6f6f;box-sizing:border-box;"></div>
<div style="position:absolute;left:791px;top:289.49999999999994px;width:184px;height:10.700000000000045px;border:1px solid #6f6f6f;box-sizing:border-box;"></div>
<div style="position:absolute;left:515px;top:300.2px;width:46px;height:10.799999999999955px;border:1px solid #6f6f6f;box-sizing:border-box;"></div>
<div style="position:absolute;left:561px;top:300.2px;width:115px;height:10.799999999999955px;border:1px solid #6f6f6f;box-sizing:border-box;"></div>
<div style="position:absolute;left:676px;top:300.2px;width:115px;height:10.799999999999955px;border:1px solid #6f6f6f;box-sizing:border-box;"></div>
<div style="position:absolute;left:791px;top:300.2px;width:184px;height:10.799999999999955px;border:1px solid #6f6f6f;box-sizing:border-box;"></div>
<div style="position:absolute;left:515px;top:310.99999999999994px;width:46px;height:21.0px;border:1px solid #6f6f6f;box-sizing:border-box;"></div>
<div style="position:absolute;left:561px;top:310.99999999999994px;width:115px;height:21.0px;border:1px solid #6f6f6f;box-sizing:border-box;"></div>
<div style="position:absolute;left:676px;top:310.99999999999994px;width:115px;height:21.0px;border:1px solid #6f6f6f;box-sizing:border-box;"></div>
<div style="position:absolute;left:791px;top:310.99999999999994px;width:184px;height:21.0px;border:1px solid #6f6f6f;box-sizing:border-box;"></div>
<div class="t" style="left:448.00px;width:180px;text-align:center;top:185.33px;font-size:9.3px;font-weight:normal;color:#e8e8e8;">Birads</div>
<div class="t" style="left:528.50px;width:180px;text-align:center;top:185.33px;font-size:9.3px;font-weight:normal;color:#e8e8e8;">Category</div>
<div class="t" style="left:643.50px;width:180px;text-align:center;top:185.33px;font-size:9.3px;font-weight:normal;color:#e8e8e8;">Management</div>
<div class="t" style="left:793.00px;width:180px;text-align:center;top:185.33px;font-size:9.3px;font-weight:normal;color:#e8e8e8;">Likelihood of cancer</div>
<div class="t" style="left:448.00px;width:180px;text-align:center;top:206.43px;font-size:9.3px;font-weight:normal;color:#e8e8e8;">0</div>
<div class="t" style="left:528.50px;width:180px;text-align:center;top:206.43px;font-size:9.3px;font-weight:normal;color:#e8e8e8;">Additional Imaging needed</div>
<div class="t" style="left:793.00px;width:180px;text-align:center;top:206.43px;font-size:9.3px;font-weight:normal;color:#e8e8e8;">n/a (not applicable)</div>
<div class="t" style="left:448.00px;width:180px;text-align:center;top:227.33px;font-size:9.3px;font-weight:normal;color:#e8e8e8;">1</div>
<div class="t" style="left:528.50px;width:180px;text-align:center;top:227.33px;font-size:9.3px;font-weight:normal;color:#e8e8e8;">Negative</div>
<div class="t" style="left:643.50px;width:180px;text-align:center;top:227.33px;font-size:9.3px;font-weight:normal;color:#e8e8e8;">Routine screening by age</div>
<div class="t" style="left:793.00px;width:180px;text-align:center;top:227.33px;font-size:9.3px;font-weight:normal;color:#e8e8e8;">Essentially 0%</div>
<div class="t" style="left:448.00px;width:180px;text-align:center;top:238.13px;font-size:9.3px;font-weight:normal;color:#e8e8e8;">2</div>
<div class="t" style="left:528.50px;width:180px;text-align:center;top:238.13px;font-size:9.3px;font-weight:normal;color:#e8e8e8;">Benign</div>
<div class="t" style="left:643.50px;width:180px;text-align:center;top:238.13px;font-size:9.3px;font-weight:normal;color:#e8e8e8;">Routine screening by age</div>
<div class="t" style="left:793.00px;width:180px;text-align:center;top:238.13px;font-size:9.3px;font-weight:normal;color:#e8e8e8;">Essentially 0%</div>
<div class="t" style="left:448.00px;width:180px;text-align:center;top:248.83px;font-size:9.3px;font-weight:normal;color:#e8e8e8;">3</div>
<div class="t" style="left:528.50px;width:180px;text-align:center;top:248.83px;font-size:9.3px;font-weight:normal;color:#e8e8e8;">Probably Benign</div>
<div class="t" style="left:643.50px;width:180px;text-align:center;top:248.83px;font-size:9.3px;font-weight:normal;color:#e8e8e8;">Short-interval follow-up</div>
<div class="t" style="left:793.00px;width:180px;text-align:center;top:248.83px;font-size:9.3px;font-weight:normal;color:#e8e8e8;">&gt; 0% and &lt;=2%</div>
<div class="t" style="left:448.00px;width:180px;text-align:center;top:275.23px;font-size:9.3px;font-weight:normal;color:#e8e8e8;">4</div>
<div class="t" style="left:528.50px;width:180px;text-align:center;top:275.23px;font-size:9.3px;font-weight:normal;color:#e8e8e8;">Suspicious</div>
<div class="t" style="left:643.50px;width:180px;text-align:center;top:275.23px;font-size:9.3px;font-weight:normal;color:#e8e8e8;">Tissue diagnosis</div>
<div class="t" style="left:448.00px;width:180px;text-align:center;top:301.83px;font-size:9.3px;font-weight:normal;color:#e8e8e8;">5</div>
<div class="t" style="left:528.50px;width:180px;text-align:center;top:301.83px;font-size:9.3px;font-weight:normal;color:#e8e8e8;">Highly</div>
<div class="t" style="left:643.50px;width:180px;text-align:center;top:301.83px;font-size:9.3px;font-weight:normal;color:#e8e8e8;">Tissue diagnosis</div>
<div class="t" style="left:793.00px;width:180px;text-align:center;top:301.83px;font-size:9.3px;font-weight:normal;color:#e8e8e8;">&gt;95%</div>
<div class="t" style="left:448.00px;width:180px;text-align:center;top:317.63px;font-size:9.3px;font-weight:normal;color:#e8e8e8;">6</div>
<div class="t" style="left:528.50px;width:180px;text-align:center;top:317.63px;font-size:9.3px;font-weight:normal;color:#e8e8e8;">Known Biopsy-Proven</div>
<div class="t" style="left:793.00px;width:180px;text-align:center;top:317.63px;font-size:9.3px;font-weight:normal;color:#e8e8e8;">n/a (not applicable)</div>
<div class="t" style="left:692.60px;top:196.03px;font-size:9.3px;font-weight:normal;color:#e8e8e8;">Recall for additional</div>
<div class="t" style="left:692.60px;top:206.23px;font-size:9.3px;font-weight:normal;color:#e8e8e8;">imaging and/or prior</div>
<div class="t" style="left:692.60px;top:216.63px;font-size:9.3px;font-weight:normal;color:#e8e8e8;">examination</div>
<div class="t" style="left:783.00px;width:200px;text-align:center;top:259.03px;font-size:9.3px;font-weight:normal;color:#e8e8e8;">4a - low suspicious (&gt; 2% and &lt;=10%)</div>
<div class="t" style="left:806.70px;top:269.83px;font-size:9.3px;font-weight:normal;color:#e8e8e8;">4b - moderate suspicious (&gt; 10% and</div>
<div class="t" style="left:806.70px;top:280.53px;font-size:9.3px;font-weight:normal;color:#e8e8e8;">&lt;=50%)</div>
<div class="t" style="left:783.00px;width:200px;text-align:center;top:290.73px;font-size:9.3px;font-weight:normal;color:#e8e8e8;">4c &#8211; high suspicious (&gt; 50% and &lt;95%)</div>
<div class="t" style="left:687.00px;top:312.23px;font-size:9.3px;font-weight:normal;color:#e8e8e8;">Surgical excision when</div>
<div class="t" style="left:687.00px;top:322.43px;font-size:9.3px;font-weight:normal;color:#e8e8e8;">appropriate</div>
</div>
<div style="position:absolute;left:1976px;top:54px;width:5.5px;height:9.5px;background:#0a84ff;border-radius:1px;"></div>
<div style="position:absolute;left:1977px;top:57.5px;width:3.5px;height:2px;background:#2f2f2f;"></div>
<div style="position:absolute;left:1976.5px;top:106px;width:5px;height:418px;background:#0a84ff;border-radius:3px;"></div>
<div style="position:absolute;left:1976px;top:521px;width:5.5px;height:3.5px;background:#0a84ff;"></div>
<div style="position:absolute;left:32px;top:543px;width:1320px;height:470px;background:#2f2f2f;"></div>
<div style="position:absolute;left:32px;top:543px;width:80px;height:22.5px;background:#0a84ff;border-radius:6px 6px 0 0;"></div>
<div class="t" style="left:39.50px;top:546.11px;font-size:17px;font-weight:normal;color:#fff;">Nodules</div>
<div style="position:absolute;left:32px;top:564.5px;width:1320px;height:447.5px;border-top:1px solid #5e5e5e;border-right:1px solid #5e5e5e;border-radius:0 3px 0 0;box-sizing:border-box;"></div>
<div style="position:absolute;left:1337px;top:570px;width:9.5px;height:12.5px;background:#f0f0f0;border-radius:2px;"></div>
<svg width="2051" height="1078" style="position:absolute;left:0;top:0"><path d="M1338.6 577.2 L1341.8 573.6 L1345 577.2 Z" fill="#222"/></svg>
<div class="t" style="left:85.60px;top:571.30px;font-size:15px;font-weight:normal;color:#f2f2f2;">Parameter</div>
<div class="t" style="left:334.20px;width:60px;text-align:right;top:571.30px;font-size:15px;font-weight:normal;color:#f2f2f2;">Value</div>
<div class="t" style="left:402.70px;top:571.30px;font-size:15px;font-weight:normal;color:#f2f2f2;">Unit</div>
<div class="t" style="left:625.30px;top:571.30px;font-size:15px;font-weight:normal;color:#f2f2f2;">Measure 1</div>
<div class="t" style="left:767.70px;top:571.30px;font-size:15px;font-weight:normal;color:#f2f2f2;">Measure 2</div>
<div class="t" style="left:910.80px;top:571.30px;font-size:15px;font-weight:normal;color:#f2f2f2;">Measure 3</div>
<div class="t" style="left:1053.60px;top:571.30px;font-size:15px;font-weight:normal;color:#f2f2f2;">Measure 4</div>
<div class="t" style="left:1196.70px;top:571.30px;font-size:15px;font-weight:normal;color:#f2f2f2;">Measure 5</div>
<div style="position:absolute;left:51px;top:589px;width:12.5px;height:12.5px;background:#e6e6e6;border:1px solid #bbb;box-sizing:border-box;"></div>
<div class="t" style="left:50.20px;width:14px;text-align:center;top:589.20px;font-size:13px;font-weight:bold;color:#e00000;">&#10006;</div>
<div class="t" style="left:85.60px;top:591.05px;font-size:14px;font-weight:bold;color:#f2f2f2;">Nodule 1</div>
<div class="t" style="left:105.60px;top:609.95px;font-size:14px;font-weight:bold;color:#f2f2f2;">Antero-Posterior</div>
<div class="t" style="left:334.20px;width:60px;text-align:right;top:609.95px;font-size:14px;font-weight:bold;color:#f2f2f2;">5.2</div>
<div class="t" style="left:402.70px;top:609.95px;font-size:14px;font-weight:bold;color:#f2f2f2;">mm</div>
<div class="t" style="left:105.60px;top:629.45px;font-size:14px;font-weight:bold;color:#f2f2f2;">Transverse</div>
<div class="t" style="left:334.20px;width:60px;text-align:right;top:629.45px;font-size:14px;font-weight:bold;color:#f2f2f2;">7.1</div>
<div class="t" style="left:402.70px;top:629.45px;font-size:14px;font-weight:bold;color:#f2f2f2;">mm</div>
<div class="t" style="left:105.60px;top:648.95px;font-size:14px;font-weight:bold;color:#f2f2f2;">Sagittal</div>
<div class="t" style="left:334.20px;width:60px;text-align:right;top:648.95px;font-size:14px;font-weight:bold;color:#f2f2f2;">---</div>
<div class="t" style="left:402.70px;top:648.95px;font-size:14px;font-weight:bold;color:#f2f2f2;">mm</div>
<div class="t" style="left:105.60px;top:667.85px;font-size:14px;font-weight:bold;color:#f2f2f2;">Volume</div>
<div class="t" style="left:334.20px;width:60px;text-align:right;top:667.85px;font-size:14px;font-weight:bold;color:#f2f2f2;">---</div>
<div class="t" style="left:402.70px;top:667.85px;font-size:14px;font-weight:bold;color:#f2f2f2;">ml</div>
<div style="position:absolute;left:656.7px;top:608px;width:71.2px;height:17.6px;background:#e4e4e4;border:1px solid #7fa9d6;box-sizing:border-box;"></div>
<div class="t" style="left:669.50px;width:30px;text-align:center;top:612.33px;font-size:10px;font-weight:normal;color:#333;">5.2</div>
<div style="position:absolute;left:713.7px;top:609.5px;width:12.8px;height:13.5px;background:#e0e0e0;border:1px solid #8a8a8a;box-sizing:border-box;"></div>
<div class="t" style="left:713.10px;width:14px;text-align:center;top:610.60px;font-size:13px;font-weight:bold;color:#ee0000;">&#10006;</div>
<div style="position:absolute;left:656.7px;top:627.8px;width:71.2px;height:17.6px;background:#e4e4e4;border:1px solid #7fa9d6;box-sizing:border-box;"></div>
<div class="t" style="left:669.50px;width:30px;text-align:center;top:632.13px;font-size:10px;font-weight:normal;color:#333;">7.1</div>
<div style="position:absolute;left:713.7px;top:629.3px;width:12.8px;height:13.5px;background:#e0e0e0;border:1px solid #8a8a8a;box-sizing:border-box;"></div>
<div class="t" style="left:713.10px;width:14px;text-align:center;top:630.40px;font-size:13px;font-weight:bold;color:#ee0000;">&#10006;</div>
<div class="t" style="left:105.30px;top:712.65px;font-size:14px;font-weight:bold;color:#f2f2f2;">Location</div>
<div style="position:absolute;left:485.2px;top:706.7px;width:206.3px;height:24px;background:#2c2c2c;border:1px solid #5c5c5c;border-radius:4px;box-sizing:border-box;"></div>
<div style="position:absolute;left:676.2px;top:707.7px;width:1.2px;height:22px;background:#555;"></div>
<div class="t" style="left:487.50px;top:711.80px;font-size:15px;font-weight:normal;color:#f2f2f2;">Left Lower</div>
<div class="t" style="left:105.30px;top:737.85px;font-size:14px;font-weight:bold;color:#f2f2f2;">Composition</div>
<div class="t" style="left:450.80px;width:30px;text-align:right;top:737.00px;font-size:15px;font-weight:normal;color:#f2f2f2;">0</div>
<div style="position:absolute;left:485.2px;top:731.9000000000001px;width:206.3px;height:24px;background:#2c2c2c;border:1px solid #5c5c5c;border-radius:4px;box-sizing:border-box;"></div>
<div style="position:absolute;left:676.2px;top:732.9000000000001px;width:1.2px;height:22px;background:#555;"></div>
<div class="t" style="left:487.50px;top:737.00px;font-size:15px;font-weight:normal;color:#f2f2f2;">Spongiform</div>
<div class="t" style="left:105.30px;top:763.45px;font-size:14px;font-weight:bold;color:#f2f2f2;">Echogenicity</div>
<div class="t" style="left:450.80px;width:30px;text-align:right;top:762.60px;font-size:15px;font-weight:normal;color:#f2f2f2;">1</div>
<div style="position:absolute;left:485.2px;top:757.5px;width:206.3px;height:24px;background:#2c2c2c;border:1px solid #5c5c5c;border-radius:4px;box-sizing:border-box;"></div>
<div style="position:absolute;left:676.2px;top:758.5px;width:1.2px;height:22px;background:#555;"></div>
<div class="t" style="left:487.50px;top:762.60px;font-size:15px;font-weight:normal;color:#f2f2f2;">Hyperechoic</div>
<div class="t" style="left:105.30px;top:789.35px;font-size:14px;font-weight:bold;color:#f2f2f2;">Shape</div>
<div class="t" style="left:450.80px;width:30px;text-align:right;top:788.50px;font-size:15px;font-weight:normal;color:#f2f2f2;">3</div>
<div style="position:absolute;left:485.2px;top:783.4000000000001px;width:206.3px;height:24px;background:#2c2c2c;border:1px solid #5c5c5c;border-radius:4px;box-sizing:border-box;"></div>
<div style="position:absolute;left:676.2px;top:784.4000000000001px;width:1.2px;height:22px;background:#555;"></div>
<div class="t" style="left:487.50px;top:788.50px;font-size:15px;font-weight:normal;color:#f2f2f2;">Taller than Wide</div>
<div class="t" style="left:105.30px;top:815.05px;font-size:14px;font-weight:bold;color:#f2f2f2;">Margins</div>
<div class="t" style="left:450.80px;width:30px;text-align:right;top:814.20px;font-size:15px;font-weight:normal;color:#f2f2f2;">2</div>
<div style="position:absolute;left:485.2px;top:809.1px;width:206.3px;height:24px;background:#2c2c2c;border:1px solid #5c5c5c;border-radius:4px;box-sizing:border-box;"></div>
<div style="position:absolute;left:676.2px;top:810.1px;width:1.2px;height:22px;background:#555;"></div>
<div class="t" style="left:487.50px;top:814.20px;font-size:15px;font-weight:normal;color:#f2f2f2;">Lobulated Irregular</div>
<div class="t" style="left:105.30px;top:835.55px;font-size:14px;font-weight:bold;color:#f2f2f2;">Echogenic Foci</div>
<div class="t" style="left:125.30px;top:857.65px;font-size:14px;font-weight:bold;color:#f2f2f2;">Large Comet Tail Artifact</div>
<div class="t" style="left:450.80px;width:30px;text-align:right;top:856.80px;font-size:15px;font-weight:normal;color:#f2f2f2;">0</div>
<div style="position:absolute;left:485.2px;top:851.7px;width:206.3px;height:24px;background:#2c2c2c;border:1px solid #5c5c5c;border-radius:4px;box-sizing:border-box;"></div>
<div style="position:absolute;left:676.2px;top:852.7px;width:1.2px;height:22px;background:#555;"></div>
<div class="t" style="left:487.50px;top:856.80px;font-size:15px;font-weight:normal;color:#f2f2f2;">Yes</div>
<div class="t" style="left:125.30px;top:883.05px;font-size:14px;font-weight:bold;color:#f2f2f2;">Peripheral Rim Calcifications</div>
<div class="t" style="left:450.80px;width:30px;text-align:right;top:882.20px;font-size:15px;font-weight:normal;color:#f2f2f2;">0</div>
<div style="position:absolute;left:485.2px;top:877.1px;width:206.3px;height:24px;background:#2c2c2c;border:1px solid #5c5c5c;border-radius:4px;box-sizing:border-box;"></div>
<div style="position:absolute;left:676.2px;top:878.1px;width:1.2px;height:22px;background:#555;"></div>
<div class="t" style="left:487.50px;top:882.20px;font-size:15px;font-weight:normal;color:#f2f2f2;">No</div>
<div class="t" style="left:125.30px;top:908.55px;font-size:14px;font-weight:bold;color:#f2f2f2;">Macrocalcification</div>
<div class="t" style="left:450.80px;width:30px;text-align:right;top:907.70px;font-size:15px;font-weight:normal;color:#f2f2f2;">0</div>
<div style="position:absolute;left:485.2px;top:902.6px;width:206.3px;height:24px;background:#2c2c2c;border:1px solid #5c5c5c;border-radius:4px;box-sizing:border-box;"></div>
<div style="position:absolute;left:676.2px;top:903.6px;width:1.2px;height:22px;background:#555;"></div>
<div class="t" style="left:487.50px;top:907.70px;font-size:15px;font-weight:normal;color:#f2f2f2;">No</div>
<div class="t" style="left:125.30px;top:934.15px;font-size:14px;font-weight:bold;color:#f2f2f2;">Punctate Echogenic Foci</div>
<div class="t" style="left:450.80px;width:30px;text-align:right;top:933.30px;font-size:15px;font-weight:normal;color:#f2f2f2;">3</div>
<div style="position:absolute;left:485.2px;top:928.2px;width:206.3px;height:24px;background:#2c2c2c;border:1px solid #5c5c5c;border-radius:4px;box-sizing:border-box;"></div>
<div style="position:absolute;left:676.2px;top:929.2px;width:1.2px;height:22px;background:#555;"></div>
<div class="t" style="left:487.50px;top:933.30px;font-size:15px;font-weight:normal;color:#f2f2f2;">Yes</div>
<div class="t" style="left:105.30px;top:978.15px;font-size:14px;font-weight:bold;color:#f2f2f2;">Tirads Score</div>
<div class="t" style="left:450.80px;width:30px;text-align:right;top:977.30px;font-size:15px;font-weight:normal;color:#f2f2f2;">9</div>
<div style="position:absolute;left:485.2px;top:972.2px;width:206.3px;height:24px;background:#2c2c2c;border:1px solid #5c5c5c;border-radius:4px;box-sizing:border-box;"></div>
<div style="position:absolute;left:676.2px;top:973.2px;width:1.2px;height:22px;background:#555;"></div>
<div class="t" style="left:487.50px;top:977.30px;font-size:15px;font-weight:normal;color:#f2f2f2;">Highly Suspicious</div>
<svg width="2051" height="1078" style="position:absolute;left:0;top:0"><path d="M680.6 717.3 H686.6 L683.6 720.5 Z" fill="#f0f0f0"/><path d="M680.6 742.5 H686.6 L683.6 745.7 Z" fill="#f0f0f0"/><path d="M680.6 768.1 H686.6 L683.6 771.3 Z" fill="#f0f0f0"/><path d="M680.6 794.0 H686.6 L683.6 797.2 Z" fill="#f0f0f0"/><path d="M680.6 819.7 H686.6 L683.6 822.9 Z" fill="#f0f0f0"/><path d="M680.6 862.3 H686.6 L683.6 865.5 Z" fill="#f0f0f0"/><path d="M680.6 887.7 H686.6 L683.6 890.9 Z" fill="#f0f0f0"/><path d="M680.6 913.2 H686.6 L683.6 916.4 Z" fill="#f0f0f0"/><path d="M680.6 938.8 H686.6 L683.6 942.0 Z" fill="#f0f0f0"/><path d="M680.6 982.8 H686.6 L683.6 986.0 Z" fill="#f0f0f0"/></svg>
<div style="position:absolute;left:721px;top:771px;width:43.5px;height:14.6px;border:1px solid #6c6c6c;box-sizing:border-box;"></div>
<div style="position:absolute;left:764.5px;top:771px;width:43.5px;height:14.6px;border:1px solid #6c6c6c;box-sizing:border-box;"></div>
<div style="position:absolute;left:808px;top:771px;width:88px;height:14.6px;border:1px solid #6c6c6c;box-sizing:border-box;"></div>
<div style="position:absolute;left:896px;top:771px;width:88px;height:14.6px;border:1px solid #6c6c6c;box-sizing:border-box;"></div>
<div style="position:absolute;left:984px;top:771px;width:175.5px;height:14.6px;border:1px solid #6c6c6c;box-sizing:border-box;"></div>
<div style="position:absolute;left:1159.5px;top:771px;width:175.5px;height:14.6px;border:1px solid #6c6c6c;box-sizing:border-box;"></div>
<div style="position:absolute;left:721px;top:785.6px;width:43.5px;height:29.9px;border:1px solid #6c6c6c;box-sizing:border-box;"></div>
<div style="position:absolute;left:764.5px;top:785.6px;width:43.5px;height:29.9px;border:1px solid #6c6c6c;box-sizing:border-box;"></div>
<div style="position:absolute;left:808px;top:785.6px;width:88px;height:29.9px;border:1px solid #6c6c6c;box-sizing:border-box;"></div>
<div style="position:absolute;left:896px;top:785.6px;width:88px;height:29.9px;border:1px solid #6c6c6c;box-sizing:border-box;"></div>
<div style="position:absolute;left:984px;top:785.6px;width:175.5px;height:29.9px;border:1px solid #6c6c6c;box-sizing:border-box;"></div>
<div style="position:absolute;left:1159.5px;top:785.6px;width:175.5px;height:29.9px;border:1px solid #6c6c6c;box-sizing:border-box;"></div>
<div style="position:absolute;left:721px;top:815.5px;width:43.5px;height:30.3px;border:1px solid #6c6c6c;box-sizing:border-box;"></div>
<div style="position:absolute;left:764.5px;top:815.5px;width:43.5px;height:30.3px;border:1px solid #6c6c6c;box-sizing:border-box;"></div>
<div style="position:absolute;left:808px;top:815.5px;width:88px;height:30.3px;border:1px solid #6c6c6c;box-sizing:border-box;"></div>
<div style="position:absolute;left:896px;top:815.5px;width:88px;height:30.3px;border:1px solid #6c6c6c;box-sizing:border-box;"></div>
<div style="position:absolute;left:984px;top:815.5px;width:175.5px;height:30.3px;border:1px solid #6c6c6c;box-sizing:border-box;"></div>
<div style="position:absolute;left:1159.5px;top:815.5px;width:175.5px;height:30.3px;border:1px solid #6c6c6c;box-sizing:border-box;"></div>
<div style="position:absolute;left:721px;top:845.8px;width:43.5px;height:30.2px;border:1px solid #6c6c6c;box-sizing:border-box;"></div>
<div style="position:absolute;left:764.5px;top:845.8px;width:43.5px;height:30.2px;border:1px solid #6c6c6c;box-sizing:border-box;"></div>
<div style="position:absolute;left:808px;top:845.8px;width:88px;height:30.2px;border:1px solid #6c6c6c;box-sizing:border-box;"></div>
<div style="position:absolute;left:896px;top:845.8px;width:88px;height:14.5px;border:1px solid #6c6c6c;box-sizing:border-box;"></div>
<div style="position:absolute;left:896px;top:860.3px;width:88px;height:15.7px;border:1px solid #6c6c6c;box-sizing:border-box;"></div>
<div style="position:absolute;left:984px;top:845.8px;width:175.5px;height:30.2px;border:1px solid #6c6c6c;box-sizing:border-box;"></div>
<div style="position:absolute;left:1159.5px;top:845.8px;width:175.5px;height:14.5px;border:1px solid #6c6c6c;box-sizing:border-box;"></div>
<div style="position:absolute;left:1159.5px;top:860.3px;width:175.5px;height:15.7px;border:1px solid #6c6c6c;box-sizing:border-box;"></div>
<div style="position:absolute;left:721px;top:876px;width:43.5px;height:44.5px;border:1px solid #6c6c6c;box-sizing:border-box;"></div>
<div style="position:absolute;left:764.5px;top:876px;width:43.5px;height:44.5px;border:1px solid #6c6c6c;box-sizing:border-box;"></div>
<div style="position:absolute;left:808px;top:876px;width:88px;height:44.5px;border:1px solid #6c6c6c;box-sizing:border-box;"></div>
<div style="position:absolute;left:896px;top:876px;width:88px;height:29px;border:1px solid #6c6c6c;box-sizing:border-box;"></div>
<div style="position:absolute;left:896px;top:905px;width:88px;height:15.5px;border:1px solid #6c6c6c;box-sizing:border-box;"></div>
<div style="position:absolute;left:984px;top:876px;width:175.5px;height:44.5px;border:1px solid #6c6c6c;box-sizing:border-box;"></div>
<div style="position:absolute;left:1159.5px;top:876px;width:175.5px;height:29px;border:1px solid #6c6c6c;box-sizing:border-box;"></div>
<div style="position:absolute;left:1159.5px;top:905px;width:175.5px;height:15.5px;border:1px solid #6c6c6c;box-sizing:border-box;"></div>
<div style="position:absolute;left:721px;top:920.5px;width:43.5px;height:29.5px;border:1px solid #6c6c6c;box-sizing:border-box;"></div>
<div style="position:absolute;left:764.5px;top:920.5px;width:43.5px;height:29.5px;border:1px solid #6c6c6c;box-sizing:border-box;"></div>
<div style="position:absolute;left:808px;top:920.5px;width:88px;height:29.5px;border:1px solid #6c6c6c;box-sizing:border-box;"></div>
<div style="position:absolute;left:896px;top:920.5px;width:88px;height:14.5px;border:1px solid #6c6c6c;box-sizing:border-box;"></div>
<div style="position:absolute;left:896px;top:935px;width:88px;height:15px;border:1px solid #6c6c6c;box-sizing:border-box;"></div>
<div style="position:absolute;left:984px;top:920.5px;width:175.5px;height:29.5px;border:1px solid #6c6c6c;box-sizing:border-box;"></div>
<div style="position:absolute;left:1159.5px;top:920.5px;width:175.5px;height:14.5px;border:1px solid #6c6c6c;box-sizing:border-box;"></div>
<div style="position:absolute;left:1159.5px;top:935px;width:175.5px;height:15px;border:1px solid #6c6c6c;box-sizing:border-box;"></div>
<div class="t" style="left:642.75px;width:200px;text-align:center;top:772.00px;font-size:13px;font-weight:normal;color:#f2f2f2;">Tirads</div>
<div class="t" style="left:686.25px;width:200px;text-align:center;top:772.00px;font-size:13px;font-weight:normal;color:#f2f2f2;">Score</div>
<div class="t" style="left:752.00px;width:200px;text-align:center;top:772.00px;font-size:13px;font-weight:normal;color:#f2f2f2;">Category</div>
<div class="t" style="left:840.00px;width:200px;text-align:center;top:772.00px;font-size:13px;font-weight:normal;color:#f2f2f2;">Dimension</div>
<div class="t" style="left:971.75px;width:200px;text-align:center;top:772.00px;font-size:13px;font-weight:normal;color:#f2f2f2;">Likelihood of cancer</div>
<div class="t" style="left:1147.25px;width:200px;text-align:center;top:772.00px;font-size:13px;font-weight:normal;color:#f2f2f2;">Recommendation</div>
<div class="t" style="left:642.75px;width:200px;text-align:center;top:794.20px;font-size:13px;font-weight:normal;color:#f2f2f2;">TR1</div>
<div class="t" style="left:686.25px;width:200px;text-align:center;top:794.20px;font-size:13px;font-weight:normal;color:#f2f2f2;">0</div>
<div class="t" style="left:752.00px;width:200px;text-align:center;top:794.20px;font-size:13px;font-weight:normal;color:#f2f2f2;">Benign</div>
<div class="t" style="left:840.00px;width:200px;text-align:center;top:794.20px;font-size:13px;font-weight:normal;color:#f2f2f2;">--</div>
<div class="t" style="left:971.75px;width:200px;text-align:center;top:794.20px;font-size:13px;font-weight:normal;color:#f2f2f2;">0.3%</div>
<div class="t" style="left:1147.25px;width:200px;text-align:center;top:787.00px;font-size:13px;font-weight:normal;color:#f2f2f2;">No FNA (Fine Needle</div>
<div class="t" style="left:1185.40px;top:802.30px;font-size:13px;font-weight:normal;color:#f2f2f2;">Aspiration) required</div>
<div class="t" style="left:642.75px;width:200px;text-align:center;top:824.20px;font-size:13px;font-weight:normal;color:#f2f2f2;">TR2</div>
<div class="t" style="left:686.25px;width:200px;text-align:center;top:824.20px;font-size:13px;font-weight:normal;color:#f2f2f2;">2</div>
<div class="t" style="left:752.00px;width:200px;text-align:center;top:824.20px;font-size:13px;font-weight:normal;color:#f2f2f2;">Not Suspicious</div>
<div class="t" style="left:840.00px;width:200px;text-align:center;top:824.20px;font-size:13px;font-weight:normal;color:#f2f2f2;">--</div>
<div class="t" style="left:971.75px;width:200px;text-align:center;top:824.20px;font-size:13px;font-weight:normal;color:#f2f2f2;">1.5%</div>
<div class="t" style="left:1147.25px;width:200px;text-align:center;top:817.40px;font-size:13px;font-weight:normal;color:#f2f2f2;">No FNA (Fine Needle</div>
<div class="t" style="left:1185.40px;top:832.40px;font-size:13px;font-weight:normal;color:#f2f2f2;">Aspiration) required</div>
<div class="t" style="left:642.75px;width:200px;text-align:center;top:854.50px;font-size:13px;font-weight:normal;color:#f2f2f2;">TR3</div>
<div class="t" style="left:686.25px;width:200px;text-align:center;top:854.50px;font-size:13px;font-weight:normal;color:#f2f2f2;">3</div>
<div class="t" style="left:821.00px;top:846.70px;font-size:13px;font-weight:normal;color:#f2f2f2;">Mildly</div>
<div class="t" style="left:821.00px;top:861.80px;font-size:13px;font-weight:normal;color:#f2f2f2;">Suspicious</div>
<div class="t" style="left:840.00px;width:200px;text-align:center;top:846.70px;font-size:13px;font-weight:normal;color:#f2f2f2;">&gt;= 1.5</div>
<div class="t" style="left:840.00px;width:200px;text-align:center;top:861.80px;font-size:13px;font-weight:normal;color:#f2f2f2;">&gt;= 2.5</div>
<div class="t" style="left:971.75px;width:200px;text-align:center;top:854.50px;font-size:13px;font-weight:normal;color:#f2f2f2;">4.8%</div>
<div class="t" style="left:1147.25px;width:200px;text-align:center;top:846.70px;font-size:13px;font-weight:normal;color:#f2f2f2;">Follow up of 1, 3 and 5 years</div>
<div class="t" style="left:1147.25px;width:200px;text-align:center;top:861.80px;font-size:13px;font-weight:normal;color:#f2f2f2;">FNA</div>
<div class="t" style="left:642.75px;width:200px;text-align:center;top:891.80px;font-size:13px;font-weight:normal;color:#f2f2f2;">TR4</div>
<div class="t" style="left:686.25px;width:200px;text-align:center;top:891.80px;font-size:13px;font-weight:normal;color:#f2f2f2;">4-6</div>
<div class="t" style="left:752.00px;width:200px;text-align:center;top:884.70px;font-size:13px;font-weight:normal;color:#f2f2f2;">Moderately</div>
<div class="t" style="left:752.00px;width:200px;text-align:center;top:899.20px;font-size:13px;font-weight:normal;color:#f2f2f2;">Suspicious</div>
<div class="t" style="left:840.00px;width:200px;text-align:center;top:884.70px;font-size:13px;font-weight:normal;color:#f2f2f2;">&gt;= 1.0</div>
<div class="t" style="left:840.00px;width:200px;text-align:center;top:906.60px;font-size:13px;font-weight:normal;color:#f2f2f2;">&gt;= 1.5</div>
<div class="t" style="left:971.75px;width:200px;text-align:center;top:891.80px;font-size:13px;font-weight:normal;color:#f2f2f2;">9.1%</div>
<div class="t" style="left:1147.25px;width:200px;text-align:center;top:877.00px;font-size:13px;font-weight:normal;color:#f2f2f2;">Follow up of 1, 2, 3 and 5</div>
<div class="t" style="left:1174.30px;top:892.10px;font-size:13px;font-weight:normal;color:#f2f2f2;">years</div>
<div class="t" style="left:1147.25px;width:200px;text-align:center;top:906.60px;font-size:13px;font-weight:normal;color:#f2f2f2;">FNA</div>
<div class="t" style="left:642.75px;width:200px;text-align:center;top:928.80px;font-size:13px;font-weight:normal;color:#f2f2f2;">TR5</div>
<div class="t" style="left:686.25px;width:200px;text-align:center;top:928.80px;font-size:13px;font-weight:normal;color:#f2f2f2;">&gt;=7</div>
<div class="t" style="left:821.00px;top:921.70px;font-size:13px;font-weight:normal;color:#f2f2f2;">Highly</div>
<div class="t" style="left:821.00px;top:936.90px;font-size:13px;font-weight:normal;color:#f2f2f2;">Suspicious</div>
<div class="t" style="left:840.00px;width:200px;text-align:center;top:921.70px;font-size:13px;font-weight:normal;color:#f2f2f2;">&gt;=0.5</div>
<div class="t" style="left:840.00px;width:200px;text-align:center;top:936.90px;font-size:13px;font-weight:normal;color:#f2f2f2;">&gt;=1.0</div>
<div class="t" style="left:971.75px;width:200px;text-align:center;top:928.80px;font-size:13px;font-weight:normal;color:#f2f2f2;">35%</div>
<div class="t" style="left:1147.25px;width:200px;text-align:center;top:921.70px;font-size:13px;font-weight:normal;color:#f2f2f2;">Follow up for up to 5 years</div>
<div class="t" style="left:1147.25px;width:200px;text-align:center;top:936.90px;font-size:13px;font-weight:normal;color:#f2f2f2;">FNA</div>
<div style="position:absolute;left:1391px;top:554px;width:595px;height:459px;background:#fff;"></div>
<div style="position:absolute;left:1391px;top:554px;width:595px;height:5px;background:linear-gradient(#e6e6e6,#f4f4f4);"></div>
<div style="position:absolute;left:1391px;top:554px;width:12px;height:60px;background:linear-gradient(90deg,#ececec,#fff);"></div>
<div style="position:absolute;left:1402.6px;top:558.8px;width:583.4px;height:26.3px;background:#02a1c0;"></div>
<div style="position:absolute;left:1402.6px;top:585.1px;width:583.4px;height:30.5px;background:#f8fdff;"></div>
<div style="position:absolute;left:1402.6px;top:615.2px;width:583.4px;height:1.6px;background:#f5a95a;"></div>
<div class="t" style="left:1404.50px;top:561.10px;font-size:21.5px;font-weight:bold;color:#fff;letter-spacing:0.4px;-webkit-text-stroke:0.4px #fff;">Thyroid</div>
<div class="t" style="left:1403.50px;top:590.72px;font-size:21px;font-weight:bold;color:#f0860f;letter-spacing:0.9px;-webkit-text-stroke:0.4px #f0860f;">Nodules</div>
<div class="t" style="left:1405.50px;top:622.83px;font-size:16.5px;font-weight:bold;color:#111;transform:scaleX(1.2);transform-origin:left;-webkit-text-stroke:0.3px #111;">Nodule 1</div>
<div class="t" style="left:1405.10px;top:648.42px;font-size:17.7px;font-weight:normal;color:#1a1a1a;letter-spacing:0.75px;-webkit-text-stroke:0.25px #1a1a1a;">Antero-Posterior</div>
<div class="t" style="left:1615.10px;top:648.42px;font-size:17.7px;font-weight:normal;color:#1a1a1a;letter-spacing:0.75px;-webkit-text-stroke:0.25px #1a1a1a;">5.2</div>
<div class="t" style="left:1722.40px;top:648.42px;font-size:17.7px;font-weight:normal;color:#1a1a1a;letter-spacing:0.75px;-webkit-text-stroke:0.25px #1a1a1a;">mm</div>
<div class="t" style="left:1405.10px;top:671.32px;font-size:17.7px;font-weight:normal;color:#1a1a1a;letter-spacing:0.75px;-webkit-text-stroke:0.25px #1a1a1a;">Transverse</div>
<div class="t" style="left:1615.10px;top:671.32px;font-size:17.7px;font-weight:normal;color:#1a1a1a;letter-spacing:0.75px;-webkit-text-stroke:0.25px #1a1a1a;">7.1</div>
<div class="t" style="left:1722.40px;top:671.32px;font-size:17.7px;font-weight:normal;color:#1a1a1a;letter-spacing:0.75px;-webkit-text-stroke:0.25px #1a1a1a;">mm</div>
<div class="t" style="left:1406.00px;top:697.82px;font-size:17.7px;font-weight:normal;color:#1a1a1a;letter-spacing:0.75px;-webkit-text-stroke:0.25px #1a1a1a;">Location</div>
<div class="t" style="left:1723.50px;top:697.82px;font-size:17.7px;font-weight:normal;color:#1a1a1a;letter-spacing:0.75px;-webkit-text-stroke:0.25px #1a1a1a;">Left Lower</div>
<div class="t" style="left:1406.00px;top:726.52px;font-size:17.7px;font-weight:normal;color:#1a1a1a;letter-spacing:0.75px;-webkit-text-stroke:0.25px #1a1a1a;">Composition</div>
<div class="t" style="left:1723.50px;top:726.52px;font-size:17.7px;font-weight:normal;color:#1a1a1a;letter-spacing:0.75px;-webkit-text-stroke:0.25px #1a1a1a;">Spongiform</div>
<div class="t" style="left:1406.00px;top:755.52px;font-size:17.7px;font-weight:normal;color:#1a1a1a;letter-spacing:0.75px;-webkit-text-stroke:0.25px #1a1a1a;">Echogenicity</div>
<div class="t" style="left:1723.50px;top:755.52px;font-size:17.7px;font-weight:normal;color:#1a1a1a;letter-spacing:0.75px;-webkit-text-stroke:0.25px #1a1a1a;">Hyperechoic</div>
<div class="t" style="left:1406.00px;top:784.32px;font-size:17.7px;font-weight:normal;color:#1a1a1a;letter-spacing:0.75px;-webkit-text-stroke:0.25px #1a1a1a;">Shape</div>
<div class="t" style="left:1723.50px;top:784.32px;font-size:17.7px;font-weight:normal;color:#1a1a1a;letter-spacing:0.75px;-webkit-text-stroke:0.25px #1a1a1a;">Taller than Wide</div>
<div class="t" style="left:1406.00px;top:813.62px;font-size:17.7px;font-weight:normal;color:#1a1a1a;letter-spacing:0.75px;-webkit-text-stroke:0.25px #1a1a1a;">Margins</div>
<div class="t" style="left:1723.50px;top:813.62px;font-size:17.7px;font-weight:normal;color:#1a1a1a;letter-spacing:0.75px;-webkit-text-stroke:0.25px #1a1a1a;">Lobulated Irregular</div>
<div class="t" style="left:1406.00px;top:843.32px;font-size:17.7px;font-weight:normal;color:#1a1a1a;letter-spacing:0.75px;-webkit-text-stroke:0.25px #1a1a1a;">Echogenic Foci</div>
<div class="t" style="left:1459.60px;top:872.52px;font-size:17.7px;font-weight:normal;color:#1a1a1a;letter-spacing:0.75px;-webkit-text-stroke:0.25px #1a1a1a;">Large Comet Tail Artifact</div>
<div class="t" style="left:1723.50px;top:872.52px;font-size:17.7px;font-weight:normal;color:#1a1a1a;letter-spacing:0.75px;-webkit-text-stroke:0.25px #1a1a1a;">Yes</div>
<div class="t" style="left:1459.60px;top:901.32px;font-size:17.7px;font-weight:normal;color:#1a1a1a;letter-spacing:0.75px;-webkit-text-stroke:0.25px #1a1a1a;">Peripheral Rim Calcifications</div>
<div class="t" style="left:1723.50px;top:901.32px;font-size:17.7px;font-weight:normal;color:#1a1a1a;letter-spacing:0.75px;-webkit-text-stroke:0.25px #1a1a1a;">No</div>
<div class="t" style="left:1459.60px;top:930.12px;font-size:17.7px;font-weight:normal;color:#1a1a1a;letter-spacing:0.75px;-webkit-text-stroke:0.25px #1a1a1a;">Macrocalcification</div>
<div class="t" style="left:1723.50px;top:930.12px;font-size:17.7px;font-weight:normal;color:#1a1a1a;letter-spacing:0.75px;-webkit-text-stroke:0.25px #1a1a1a;">No</div>
<div class="t" style="left:1459.60px;top:959.22px;font-size:17.7px;font-weight:normal;color:#1a1a1a;letter-spacing:0.75px;-webkit-text-stroke:0.25px #1a1a1a;">Punctate Echogenic Foci</div>
<div class="t" style="left:1723.50px;top:959.22px;font-size:17.7px;font-weight:normal;color:#1a1a1a;letter-spacing:0.75px;-webkit-text-stroke:0.25px #1a1a1a;">Yes</div>
<div class="t" style="left:1406.00px;top:989.52px;font-size:17.7px;font-weight:bold;color:#111;transform:scaleX(1.12);transform-origin:left;-webkit-text-stroke:0.3px #111;">Tirads Score</div>
<div class="t" style="left:1723.50px;top:989.52px;font-size:17.7px;font-weight:bold;color:#111;transform:scaleX(1.12);transform-origin:left;-webkit-text-stroke:0.3px #111;">Highly Suspicious</div>
</body></html>
